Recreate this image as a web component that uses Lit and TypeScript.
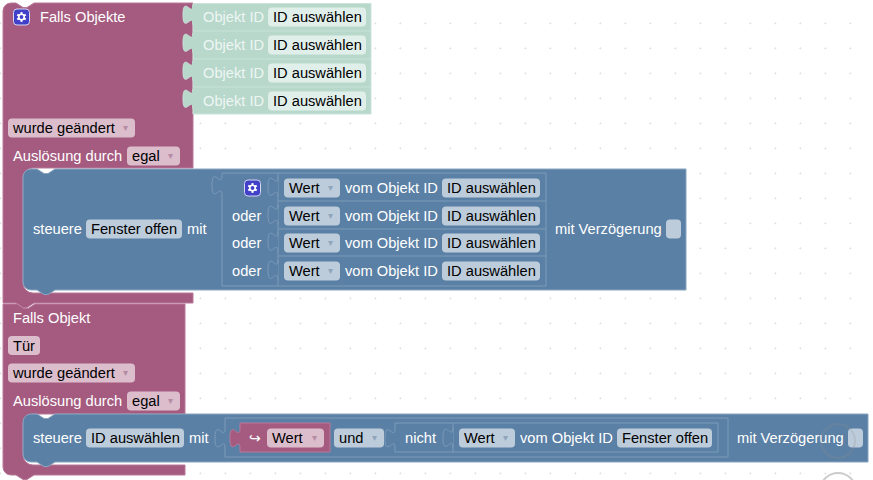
import { LitElement, html, css, svg } from "lit";
import { customElement } from "lit/decorators.js";

type Tone = "purple" | "blue" | "green";

const tabDown = "c 0,13 -10,-10.4 -10,9.75 s 10,-3.25 10,9.75";
const tabUp = "c 0,-13 -10,10.4 -10,-9.75 s 10,3.25 10,-9.75";
const notch = "l 7,4.5 4,0 7,-4.5";
const notchBack = "l -7,4.5 -4,0 -7,-4.5";

const label = (x: number, cy: number, text: string, cls = "label") =>
  svg`<text class=${cls} x=${x} y=${cy + 5}>${text}</text>`;

const pill = (x: number, cy: number, w: number, text: string, tone: Tone, arrow = false) => svg`
  <rect class="pill ${tone}" x=${x} y=${cy - 9.5} width=${w} height="19" rx="4" ry="4"></rect>
  <text class="ftext" x=${x + 5} y=${cy + 5}>${text}</text>
  ${arrow ? svg`<text class="arrow ${tone}" x=${x + w - 10} y=${cy + 3}>▾</text>` : ""}
`;

const gear = (x: number, y: number) => svg`
  <g transform="translate(${x} ${y})">
    <rect class="gearbox" x="0.5" y="0.5" width="16" height="16" rx="3.5"></rect>
    <circle class="gearring" cx="8.5" cy="8.5" r="3.6"></circle>
    ${[0, 60, 120].map(
      (a) => svg`<line class="gearteeth" x1="8.5" y1="3.6" x2="8.5" y2="13.4" transform="rotate(${a} 8.5 8.5)"></line>`
    )}
    <circle class="gearhole" cx="8.5" cy="8.5" r="1.9"></circle>
  </g>`;

const objectRows = [17, 45, 73, 101];
const orRows = [
  { cy: 188, top: 173, word: "" },
  { cy: 216, top: 201, word: "oder" },
  { cy: 243, top: 229, word: "oder" },
  { cy: 271, top: 256, word: "oder" },
];

const purpleOne = `M3,11 a8,8 0 0 1 8,-8 H16 ${notch} H193 V168 H33 a10,10 0 0 0 -10,10 V283 a10,10 0 0 0 10,10 H193 V303 H34 ${notchBack} H3 Z`;
const purpleTwo = `M3,304 H17 ${notch} H185 V414 H33 a10,10 0 0 0 -10,10 V455 a10,10 0 0 0 10,10 H185 V475 H34 ${notchBack} H11 a8,8 0 0 1 -8,-8 Z`;
const blueOne = `M31,169 H37 ${notch} H686 V290 H55 ${notchBack} H31 a8,8 0 0 1 -8,-8 V177 a8,8 0 0 1 8,-8 Z`;
const blueTwo = `M31,414 H37 ${notch} H868 V462 H55 ${notchBack} H31 a8,8 0 0 1 -8,-8 V422 a8,8 0 0 1 8,-8 Z`;

@customElement("app-root")
export class AppRoot extends LitElement {
  static styles = css`
    :host {
      display: block;
      width: 873px;
      height: 480px;
      overflow: hidden;
      background: #ffffff;
    }
    svg {
      display: block;
    }
    text {
      font-family: "Liberation Sans", Arial, sans-serif;
      font-size: 14.67px;
      white-space: pre;
    }
    .grid-mark {
      stroke: #d8d8d8;
      stroke-width: 1;
    }
    .control {
      fill: none;
      stroke: #8d8d8d;
      stroke-width: 2;
      opacity: 0.22;
    }
    .control.lower {
      opacity: 0.45;
    }
    .b-purple {
      fill: #a55b80;
      stroke: #b9799a;
      stroke-width: 1;
    }
    .b-blue {
      fill: #5b80a5;
      stroke: #8aa5c0;
      stroke-width: 1;
    }
    .b-green {
      fill: #b8d8cc;
      stroke: #cbe3da;
      stroke-width: 1;
    }
    .outline {
      fill: #5b80a5;
      stroke: #7d9bb9;
      stroke-width: 1;
    }
    .divider {
      stroke: #7d9bb9;
      stroke-width: 1;
    }
    .divider-green {
      stroke: #c8e2d8;
      stroke-width: 1;
    }
    .seam {
      stroke: #b8d8cc;
      stroke-width: 2;
    }
    .pill.purple {
      fill: #dbbdcc;
    }
    .pill.blue {
      fill: #bdccdb;
    }
    .pill.green {
      fill: #e1efea;
    }
    .label {
      fill: #ffffff;
    }
    .label-green {
      fill: #eef6f3;
    }
    .ftext {
      fill: #000000;
    }
    .arrow {
      font-size: 10px;
      text-anchor: middle;
    }
    .arrow.purple {
      fill: #b58ca3;
    }
    .arrow.blue {
      fill: #8fa5bc;
    }
    .gearbox {
      fill: #4040c8;
      stroke: #d5d5f2;
      stroke-width: 1;
    }
    .gearring {
      fill: #ffffff;
    }
    .gearteeth {
      stroke: #ffffff;
      stroke-width: 2;
    }
    .gearhole {
      fill: #4040c8;
    }
    .return {
      fill: #ffffff;
      font-family: "DejaVu Sans", sans-serif;
      font-size: 14px;
    }
  `;

  private renderGreen() {
    return svg`
      <path class="b-green" d="M193,3.5 H371 V114 H193 Z"></path>
      ${objectRows.map(
        (cy) => svg`
          <path class="b-green" d="M193,${cy - 12} ${tabDown}"></path>
          <line class="seam" x1="193" y1=${cy - 12} x2="193" y2=${cy + 7.5}></line>
          ${label(203, cy, "Objekt ID", "label-green")}
          ${pill(268, cy, 98, "ID auswählen", "green")}
        `
      )}
      ${[31, 59, 87].map(
        (y) => svg`<line class="divider-green" x1="193" y1=${y} x2="371" y2=${y}></line>`
      )}
    `;
  }

  private renderLogic() {
    return svg`
      <path class="outline" d="M222,173 H546 V286 H222 V195 ${tabUp} Z"></path>
      <line class="divider" x1="278" y1="173" x2="278" y2="286"></line>
      ${orRows.map(
        (r, i) => svg`
          ${i > 0 ? svg`<line class="divider" x1="278" y1=${r.top} x2="546" y2=${r.top}></line>` : ""}
          <path class="outline" d="M278,${r.cy - 11} ${tabDown}"></path>
          ${r.word ? label(232, r.cy, r.word) : gear(244, r.cy - 8.5)}
          ${pill(284, r.cy, 56, "Wert", "blue", true)}
          ${label(345, r.cy, "vom Objekt ID")}
          ${pill(442, r.cy, 98, "ID auswählen", "blue")}
        `
      )}
    `;
  }

  private renderSecondRow() {
    const cy = 438;
    return svg`
      <path class="outline" d="M225,418 H728 V457 H225 V448 ${tabUp} Z"></path>
      <path class="b-purple" d="M240,423 H330 V452 H240 V448 ${tabUp} Z"></path>
      <text class="return" x="249" y=${cy + 5}>↪</text>
      ${pill(267, cy, 57, "Wert", "purple", true)}
      ${pill(334, cy, 50, "und", "blue", true)}
      <path class="outline" d="M395,423 H718 V452 H395 V448 ${tabUp} Z"></path>
      <line class="divider" x1="453" y1="423" x2="453" y2="452"></line>
      <path class="outline" d="M453,428 ${tabDown}"></path>
      ${label(405, cy, "nicht")}
      ${pill(459, cy, 56, "Wert", "blue", true)}
      ${label(520, cy, "vom Objekt ID")}
      ${pill(617, cy, 95, "Fenster offen", "blue")}
      ${label(737, cy, "mit Verzögerung")}
      ${pill(848, cy, 15, "", "blue")}
    `;
  }

  render() {
    return html`
      <svg width="873" height="480" viewBox="0 0 873 480" role="img" aria-label="Blockly workspace">
        <defs>
          <pattern id="grid" width="25" height="25" patternUnits="userSpaceOnUse" patternTransform="translate(0 23)">
            <path class="grid-mark" d="M0,0 h1.5 M24,0 h1 M0,0 v1.5 M0,24 v1"></path>
          </pattern>
        </defs>
        <rect width="873" height="480" fill="url(#grid)"></rect>

        <path class="b-purple" d=${purpleOne}></path>
        <path class="b-purple" d=${purpleTwo}></path>

        ${this.renderGreen()}
        ${gear(13, 8.5)}
        ${label(40, 17, "Falls Objekte")}
        ${pill(8, 128, 127, "wurde geändert", "purple", true)}
        ${label(13, 156, "Auslösung durch")}
        ${pill(127, 156, 53, "egal", "purple", true)}

        <path class="b-blue" d=${blueOne}></path>
        ${label(33, 229, "steuere")}
        ${pill(86, 229, 96, "Fenster offen", "blue")}
        ${label(187, 229, "mit")}
        ${this.renderLogic()}
        ${label(555, 229, "mit Verzögerung")}
        ${pill(666, 229, 15, "", "blue")}

        ${label(13, 318, "Falls Objekt")}
        ${pill(8, 345.5, 32, "Tür", "purple")}
        ${pill(8, 373, 127, "wurde geändert", "purple", true)}
        ${label(13, 401, "Auslösung durch")}
        ${pill(127, 401, 53, "egal", "purple", true)}

        <path class="b-blue" d=${blueTwo}></path>
        ${label(33, 438, "steuere")}
        ${pill(86, 438, 98, "ID auswählen", "blue")}
        ${label(189, 438, "mit")}
        ${this.renderSecondRow()}

        <circle class="control" cx="838" cy="441" r="17"></circle>
        <circle class="control lower" cx="838" cy="491" r="18"></circle>
      </svg>
    `;
  }
}
